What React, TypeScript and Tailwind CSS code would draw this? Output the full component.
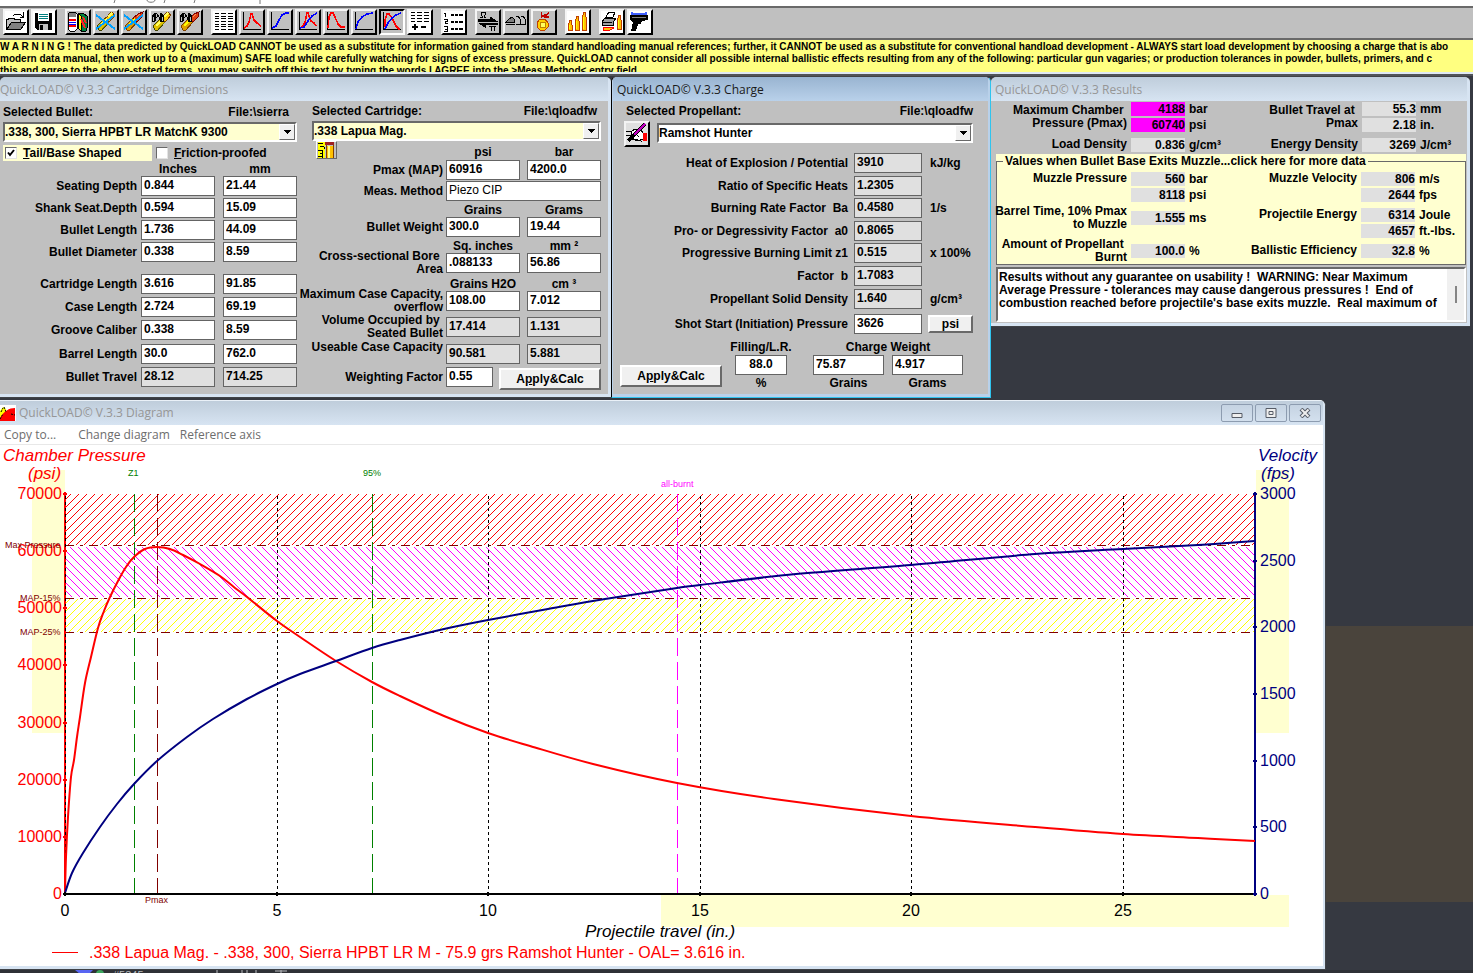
import { clsx } from 'clsx'
import { useId } from 'react'
import type { ReactNode } from 'react'

const inputBase =
  'h-5 w-full min-w-0 border border-[#646464] px-0.5 pb-0.5 leading-4 outline-none'

interface BoxProps {
  id?: string
  value: string
  label?: string
  readOnly?: boolean
  className?: string
}

function Box({ id, value, label, readOnly, className }: BoxProps) {
  return (
    <input
      id={id}
      aria-label={label}
      defaultValue={value}
      readOnly={readOnly}
      className={clsx(
        inputBase,
        readOnly ? 'bg-[#e0e0e0]' : 'bg-white',
        className,
      )}
    />
  )
}

interface PairRowProps {
  label: ReactNode
  name: string
  values: [string, string]
  readOnly?: boolean
}

// label plus the same quantity in two units, fills three grid cells
function PairRow({ label, name, values, readOnly }: PairRowProps) {
  const id = useId()

  return (
    <>
      <label
        htmlFor={id}
        className="-mr-1 flex h-5 items-center justify-end text-right leading-[13px] whitespace-nowrap"
      >
        <span>{label}</span>
      </label>
      <Box id={id} value={values[0]} readOnly={readOnly} />
      <Box label={`${name} (2)`} value={values[1]} readOnly={readOnly} />
    </>
  )
}

function UnitHeads({ first, second }: { first: ReactNode; second: ReactNode }) {
  return (
    <>
      <span />
      <span className="self-end text-center leading-[13px] whitespace-nowrap">
        {first}
      </span>
      <span className="self-end text-center leading-[13px] whitespace-nowrap">
        {second}
      </span>
    </>
  )
}

interface DropDownProps {
  id: string
  value: string
  yellow?: boolean
}

function DropDown({ id, value, yellow }: DropDownProps) {
  return (
    <div className="relative h-5 w-full border-2 border-t-[#696969] border-r-white border-b-white border-l-[#696969]">
      <select
        id={id}
        className={clsx(
          'block h-4 w-full appearance-none font-bold outline-none',
          yellow ? 'bg-[#ffffd0]' : 'bg-white',
        )}
      >
        <option>{value}</option>
      </select>
      <span className="pointer-events-none absolute top-0 right-0 flex h-4 w-4 items-center justify-center border border-t-white border-r-[#696969] border-b-[#696969] border-l-white bg-[#f0f0f0]">
        <svg width="7" height="4" shapeRendering="crispEdges">
          <path d="M0 0h7L3.500 4z" />
        </svg>
      </span>
    </div>
  )
}

function PushButton({
  children,
  className,
}: {
  children: ReactNode
  className?: string
}) {
  return (
    <button
      type="button"
      className={clsx(
        'border-2 border-t-white border-r-[#696969] border-b-[#696969] border-l-white bg-[#f0f0f0] text-center leading-4 font-bold',
        className,
      )}
    >
      {children}
    </button>
  )
}

interface MdiWindowProps {
  title: string
  active?: boolean
  flush?: boolean
  children: ReactNode
}

function MdiWindow({ title, active, flush, children }: MdiWindowProps) {
  return (
    <section
      className={clsx(
        'min-w-0 overflow-hidden rounded-t-md border-t border-b border-t-[#404347] bg-[#c0c0c0]',
        active
          ? 'border-r border-l border-r-[#2fc4ee] border-b-[#2fc4ee] border-l-black'
          : 'border-b-[#404347]',
      )}
    >
      <div
        className={clsx(
          'border-b-[3px]',
          active
            ? 'border-r-2 border-l border-[#b9d1ea]'
            : 'border-r-[3px] border-[#d7e4f2]',
        )}
      >
        <h2
          className={clsx(
            "h-6 bg-linear-to-b font-['Open_Sans',sans-serif] text-[12px] leading-[25px] font-normal",
            active
              ? 'from-[#99b4d1] to-[#b9d1ea] text-[#1a1a1a]'
              : 'from-[#bfcddb] to-[#d7e4f2] text-[#969696]',
            flush ? 'pl-0' : 'pl-1',
          )}
        >
          {title}
        </h2>
        {children}
      </div>
    </section>
  )
}

/* ---------- toolbar ---------- */

function Icon({ children }: { children: ReactNode }) {
  return (
    <svg
      width="22"
      height="22"
      viewBox="0 0 22 22"
      fill="none"
      shapeRendering="crispEdges"
    >
      {children}
    </svg>
  )
}

const axes = <path d="M2.500 1v18M2 18.500h18" stroke="#000" />

const shell = (
  <>
    <path d="M2 15l8-8 4 4-7 8H4z" fill="#e0c000" stroke="#404000" />
    <path d="M10 7l2-1 4-5 4 3-4 5-2 2z" fill="#ffd000" stroke="#804000" />
    <path d="M5 15l7-7M13 6l4-4" stroke="#ffff60" strokeWidth="2" />
    <path d="M7 18l7-7" stroke="#808000" />
  </>
)

const bullet = (
  <>
    <path d="M2 15l8-8 4 4-7 8H4z" fill="#e0a000" stroke="#804000" />
    <path d="M10 7l5-4 5-2-1 5-5 5z" fill="#e04010" stroke="#800000" />
    <path d="M5 15l7-7" stroke="#ffff00" strokeWidth="2" />
    <path d="M14 6l3-3" stroke="#ff9060" />
  </>
)

const crossOut = (
  <path d="M1 4l19 14M1 18L20 4" stroke="#00a0ff" strokeWidth="2" />
)

const binoculars = (
  <>
    <path d="M1 9V5l2-3h2l2 2 2-2h2l2 3v5l-1 1h-3L8 6H6l-2 5H1z" fill="#000" />
    <path d="M2.500 6v4M11.500 6v4M5.500 3v3M8.500 3v3" stroke="#c0c0c0" />
  </>
)

function Cartridge({ x, y, h }: { x: number; y: number; h: number }) {
  return (
    <>
      <path
        d={`M${x} ${y + h}v-${h - 5}l1-2v-3h2v3l1 2v${h - 5}z`}
        fill="#ffc000"
        stroke="#c04000"
      />
      <path d={`M${x + 1.5} ${y + 5}v${h - 6}`} stroke="#ffff00" />
    </>
  )
}

const toolGroups: { name: string; white?: boolean; on?: boolean; icon: ReactNode }[][] = [
  [
    {
      name: 'Open',
      white: true,
      icon: (
        <>
          <path d="M1.500 18V8h2l1-1h4l1 1h6v4" fill="#c0c0c0" stroke="#000" />
          <path d="M1.500 18.500l5-7h14l-5 7z" fill="#808080" stroke="#000" />
          <path d="M8 5l2-2h5l3 3M18.500 1v5h-4" stroke="#000" />
        </>
      ),
    },
    {
      name: 'Save',
      white: true,
      icon: (
        <>
          <path d="M2 2h17v17H4l-2-2z" fill="#000" />
          <path d="M5 2h11v8H5z" fill="#fff" />
          <path d="M6 3.500h9M6 5.500h9M6 7.500h9" stroke="#008080" />
          <path d="M6 13h9v6H6z" fill="#c0c0c0" />
          <path d="M7 14h3v5H7z" fill="#000" />
        </>
      ),
    },
  ],
  [
    {
      name: 'Powder list',
      icon: (
        <>
          <path d="M1 3l2-2h5l2 2v15l-2 2H3l-2-2z" fill="#fff" stroke="#000" />
          <path d="M2 2h7v4H2z" fill="#808080" />
          <path d="M2 8.500h7M2 15h7" stroke="#ff0000" strokeWidth="2" />
          <path d="M2 11.500h7M2 13h7" stroke="#0000ff" />
          <path d="M11 2l3 3v15l-3-3z" fill="#ffff00" stroke="#000" />
          <path d="M11 2h5l4 3v12l-1 3h-5V5z" fill="#008040" stroke="#000" />
          <path d="M14 8l4 9M16 6l3 6" stroke="#ff2020" strokeWidth="2" />
        </>
      ),
    },
    { name: 'Delete cartridge', icon: <>{shell}{crossOut}</> },
    { name: 'Delete bullet', icon: <>{bullet}{crossOut}</> },
    { name: 'Find cartridge', icon: <>{shell}{binoculars}</> },
    { name: 'Find bullet', icon: <>{bullet}{binoculars}</> },
  ],
  [
    {
      name: 'Table',
      white: true,
      icon: (
        <path
          d="M2 2.500h4M8 2.500h5M15 2.500h5M2 5.500h4M8 5.500h5M15 5.500h5M2 7.500h4M8 7.500h5M15 7.500h5M2 10.500h4M8 10.500h5M15 10.500h5M2 13.500h4M8 13.500h5M15 13.500h5M2 15.500h4M8 15.500h5M15 15.500h5M2 18.500h4M8 18.500h5M15 18.500h5"
          stroke="#000"
        />
      ),
    },
    {
      name: 'Pressure over travel',
      icon: (
        <>
          {axes}
          <path d="M3 17l3-2 2-4 2-8h1l2 6 3 3 4 3" stroke="#f00" strokeWidth="1.500" />
        </>
      ),
    },
    {
      name: 'Velocity over travel',
      icon: (
        <>
          {axes}
          <path d="M3 17l4-2 3-6 3-5 4-2h3" stroke="#00f" strokeWidth="1.500" />
        </>
      ),
    },
    {
      name: 'Pressure and velocity over time',
      icon: (
        <>
          {axes}
          <path d="M3 17l3-2 2-4 2-9h1l3 8 3 2 2 3" stroke="#f00" strokeWidth="1.500" />
          <path d="M3 17l4-1 4-6 4-5 5-3" stroke="#00f" strokeWidth="1.500" />
        </>
      ),
    },
    {
      name: 'Pressure curve',
      icon: (
        <>
          {axes}
          <path d="M3 17l1-11 2-4h2l2 4 3 7 3 3h4" stroke="#f00" strokeWidth="1.500" />
        </>
      ),
    },
    {
      name: 'Velocity curve',
      icon: (
        <>
          {axes}
          <path d="M3 18l2-7 4-5 5-3 6-1" stroke="#00f" strokeWidth="1.500" />
        </>
      ),
    },
    {
      name: 'Pressure and velocity',
      on: true,
      icon: (
        <>
          {axes}
          <path d="M4 16V9l2-6h2l3 4 4 8 4 4" stroke="#f00" strokeWidth="1.500" />
          <path d="M4 18l3-6 4-5 4-3 5-2" stroke="#00f" strokeWidth="1.500" />
        </>
      ),
    },
    {
      name: 'Step table',
      white: true,
      icon: (
        <>
          <path
            d="M2 1.500h4M8 1.500h5M15 1.500h5M2 4.500h4M8 4.500h5M15 4.500h5M2 7.500h4M8 7.500h5M15 7.500h5M2 10.500h4M8 10.500h5M15 10.500h5"
            stroke="#000"
          />
          <path d="M3 16h6M6 13v6M12 16h5" stroke="#000" strokeWidth="2" />
        </>
      ),
    },
  ],
  [
    {
      name: 'Numbered list',
      white: true,
      icon: (
        <>
          <path
            d="M1 2.500h2M2.500 2v4M1 8.500h3v2h-2v2h3M1 15.500h3v5h-3M2 18.500h2"
            stroke="#000"
          />
          <path
            d="M8 4h3M12 4h3M16 4h4M8 11h3M12 11h3M16 11h4M8 18h3M12 18h3M16 18h4"
            stroke="#000"
            strokeWidth="2"
          />
        </>
      ),
    },
  ],
  [
    {
      name: 'Unit conversion',
      icon: (
        <>
          <path d="M3 6.500h2V5l-1-1V1.500h4V4L7 5v1.500h2" stroke="#000" />
          <path d="M1 8.500h12V6l6 4H1z" fill="#000" stroke="#000" />
          <path d="M20 13.500H8V16l-6-4h18z" fill="#000" stroke="#000" />
          <path d="M12 15.500h7M14.500 15v5M17.500 15v5" stroke="#000" />
        </>
      ),
    },
    {
      name: 'Bullet step',
      icon: (
        <>
          <path d="M1 11l3-3 3-2 2 2v3z" fill="#808080" stroke="#000" />
          <path d="M1 13.500h9" stroke="#000" />
          <path d="M11 5h2l2 3v5.500h-4M16 5h2l2 3v5.500h-4" stroke="#000" />
        </>
      ),
    },
    {
      name: 'Powder charge',
      icon: (
        <>
          <path d="M8.500 1v6M9 5h3l4-3M12 3v3h4" stroke="#c00000" strokeWidth="1.500" />
          <path d="M7 8h5l3 4v4l-3 3H7l-3-3v-4z" fill="#ffd000" stroke="#c04000" />
          <path d="M7 11h5v5H7z" fill="#ffff60" stroke="#c08000" />
        </>
      ),
    },
  ],
  [
    {
      name: 'Compare cartridges',
      white: true,
      icon: (
        <>
          <Cartridge x={1} y={9} h={10} />
          <Cartridge x={8} y={5} h={14} />
          <Cartridge x={15} y={1} h={18} />
        </>
      ),
    },
  ],
  [
    {
      name: 'Print load',
      white: true,
      icon: (
        <>
          <path d="M1 11l3-4h11l-3 5v2H1z" fill="#a0a0a0" stroke="#000" />
          <path d="M5 6l3-5h6l-2 5z" fill="#fff" stroke="#000" />
          <path d="M2 11.500h9" stroke="#000" />
          <Cartridge x={16} y={4} h={14} />
          <path d="M2 16h7l4 1-4 2H2z" fill="#ffc000" stroke="#ff0000" />
        </>
      ),
    },
    {
      name: 'Gun',
      white: true,
      icon: (
        <>
          <path d="M2 1h2v1h12V1h2v3H2z" fill="#4060ff" />
          <path d="M1 4h18v5l-6 1-1 3H9l-2 7H2l2-9-3-2z" fill="#000" />
          <path d="M3 6.500h14" stroke="#808080" />
        </>
      ),
    },
  ],
]

function Toolbar() {
  return (
    <header>
      <div className="h-1.5 bg-white">
        <svg width="300" height="4" className="block" stroke="#777">
          <path d="M115 0l-1 3M147 0c0 3 8 3 8 0M165 0l-1 3M195 0l-1 3M260 0v4" fill="none" />
        </svg>
      </div>
      <div className="flex h-[34px] gap-2 border-y-2 border-[#696969] bg-[#c0c0c0] pt-px pl-[3px]">
        {toolGroups.map((group, i) => (
          <div key={i} className="flex gap-0.5">
            {group.map((tool) => (
              <button
                key={tool.name}
                type="button"
                aria-label={tool.name}
                className={clsx(
                  'size-[26px] border-2',
                  tool.on
                    ? 'border-t-black border-r-white border-b-white border-l-black'
                    : 'border-t-[#f4f4f4] border-r-black border-b-black border-l-[#f4f4f4]',
                  tool.white ? 'bg-white' : 'bg-[#c0c0c0]',
                )}
              >
                <Icon>{tool.icon}</Icon>
              </button>
            ))}
          </div>
        ))}
      </div>
      <p className="h-8 overflow-hidden bg-[#ffff80] pt-px text-[10px] leading-3 font-bold whitespace-pre">
        {`W A R N I N G ! The data predicted by QuickLOAD CANNOT be used as a substitute for information gained from standard handloading manual references; further, it CANNOT be used as a substitute for conventional handload development - ALWAYS start load development by choosing a charge that is abo
modern data manual, then work up to a (maximum) SAFE load while carefully watching for signs of excess pressure. QuickLOAD cannot consider all possible internal ballistic effects resulting from any of the following: particular gun vagaries; or production tolerances in powder, bullets, primers, and c
this and agree to the above-stated terms, you may switch off this text by typing the words I AGREE into the >Meas.Method< entry field.`}
      </p>
      <div className="h-1 border-t-2 border-t-[#dfe9f3] bg-[#505358]" />
    </header>
  )
}

/* ---------- windows ---------- */

function CartridgeWindow() {
  return (
    <MdiWindow title="QuickLOAD© V.3.3 Cartridge Dimensions" flush>
      <div className="grid h-[293px] grid-cols-2">
        <div className="pr-[7px] pl-[3px]">
          <div className="flex h-[21px] items-center justify-between pr-2">
            <label htmlFor="bullet">Selected Bullet:</label>
            <span>File:\sierra</span>
          </div>
          <DropDown id="bullet" value=".338, 300, Sierra HPBT LR MatchK 9300" yellow />
          <div className="mt-[3px] flex h-4 items-center gap-1">
            <label className="flex h-4 w-[149px] items-center gap-1.5 bg-[#ffffd0] pl-0.5">
              <CheckBox checked />
              <span>
                <u>T</u>ail/Base Shaped
              </span>
            </label>
            <label className="flex items-center gap-1.5">
              <CheckBox />
              <span>
                <u>F</u>riction-proofed
              </span>
            </label>
          </div>
          <div className="grid grid-cols-[minmax(0,1fr)_74px_74px] grid-rows-[15px_22px_22px_22px_32px_23px_23px_24px_23px_20px] gap-x-2">
            <UnitHeads first="Inches" second="mm" />
            <PairRow label="Seating Depth" name="Seating Depth" values={['0.844', '21.44']} />
            <PairRow label="Shank Seat.Depth" name="Shank Seat.Depth" values={['0.594', '15.09']} />
            <PairRow label="Bullet Length" name="Bullet Length" values={['1.736', '44.09']} />
            <PairRow label="Bullet Diameter" name="Bullet Diameter" values={['0.338', '8.59']} />
            <PairRow label="Cartridge Length" name="Cartridge Length" values={['3.616', '91.85']} />
            <PairRow label="Case Length" name="Case Length" values={['2.724', '69.19']} />
            <PairRow label="Groove Caliber" name="Groove Caliber" values={['0.338', '8.59']} />
            <PairRow label="Barrel Length" name="Barrel Length" values={['30.0', '762.0']} />
            <PairRow
              label="Bullet Travel"
              name="Bullet Travel"
              values={['28.12', '714.25']}
              readOnly
            />
          </div>
        </div>

        <div className="pr-[7px] pl-2">
          <div className="flex h-5 items-center justify-between pr-1">
            <label htmlFor="cartridge">Selected Cartridge:</label>
            <span>File:\qloadfw</span>
          </div>
          <DropDown id="cartridge" value=".338 Lapua Mag." yellow />
          <div className="grid grid-cols-[minmax(0,1fr)_74px_74px] grid-rows-[19px_21px_22px_14px_22px_14px_24px_14px_26px_27px_23px_24px] gap-x-[7px]">
            <button
              type="button"
              aria-label="Cartridge drawing"
              className="ml-1 h-[18px] w-[21px] border border-t-white border-r-[#696969] border-b-[#696969] border-l-white"
            >
              <svg width="19" height="16" viewBox="0 0 19 16" shapeRendering="crispEdges">
                <path d="M0 0h19v16H0z" fill="#c0c0c0" />
                <path d="M1 0h7v16H1z" fill="#ff0" />
                <path d="M1 1.500h5M3 4.500h4M1 8.500h4M3 11.500h3M1 14.500h4M7.500 5v2M5.500 8v8" stroke="#000" />
                <path d="M8 0h9v3H8z" fill="#a02020" />
                <path d="M10 4h6v12h-6z" fill="#ffc000" />
                <path d="M11 4h2v12h-2z" fill="#ff8" />
                <path d="M9.500 3v13M16.500 3v13" stroke="#804000" />
              </svg>
            </button>
            <span className="self-end text-center leading-4">psi</span>
            <span className="self-end text-center leading-4">bar</span>
            <PairRow label="Pmax (MAP)" name="Pmax" values={['60916', '4200.0']} />
            <label
              htmlFor="method"
              className="-mr-1 flex h-5 items-center justify-end whitespace-nowrap"
            >
              Meas. Method
            </label>
            <div className="col-span-2">
              <Box id="method" value="Piezo CIP" className="font-normal" />
            </div>
            <UnitHeads first="Grains" second="Grams" />
            <PairRow label="Bullet Weight" name="Bullet Weight" values={['300.0', '19.44']} />
            <UnitHeads first="Sq. inches" second="mm ²" />
            <PairRow
              label={
                <>
                  Cross-sectional Bore&nbsp;
                  <br />
                  Area
                </>
              }
              name="Bore Area"
              values={['.088133', '56.86']}
            />
            <UnitHeads first="Grains H2O" second="cm ³" />
            <PairRow
              label={
                <>
                  Maximum Case Capacity,
                  <br />
                  overflow
                </>
              }
              name="Case Capacity"
              values={['108.00', '7.012']}
            />
            <PairRow
              label={
                <>
                  Volume Occupied by&nbsp;
                  <br />
                  Seated Bullet
                </>
              }
              name="Seated Volume"
              values={['17.414', '1.131']}
              readOnly
            />
            <PairRow
              label={
                <>
                  Useable Case Capacity
                  <br />
                  &nbsp;
                </>
              }
              name="Useable Capacity"
              values={['90.581', '5.881']}
              readOnly
            />
            <label
              htmlFor="weighting"
              className="-mr-1 flex h-5 items-center justify-end whitespace-nowrap"
            >
              Weighting Factor
            </label>
            <div className="col-span-2 flex items-start justify-between">
              <div className="w-[47px]">
                <Box id="weighting" value="0.55" />
              </div>
              <PushButton className="mt-px h-[22px] w-[102px]">
                A<u>p</u>ply&amp;Calc
              </PushButton>
            </div>
          </div>
        </div>
      </div>
    </MdiWindow>
  )
}

function CheckBox({ checked }: { checked?: boolean }) {
  return (
    <span className="relative size-3">
      <input
        type="checkbox"
        defaultChecked={checked}
        className="peer block size-3 appearance-none border border-t-[#696969] border-r-[#e3e3e3] border-b-[#e3e3e3] border-l-[#696969] bg-white"
      />
      <svg
        viewBox="0 0 12 12"
        className="pointer-events-none absolute inset-0 hidden size-3 peer-checked:block"
        fill="none"
      >
        <path d="M3 5.500l2 2.500 4-5" stroke="#000" strokeWidth="2" />
      </svg>
    </span>
  )
}

const propellantRows: { label: string; value: string; unit: string }[] = [
  { label: 'Heat of Explosion / Potential', value: '3910', unit: 'kJ/kg' },
  { label: 'Ratio of Specific Heats', value: '1.2305', unit: '' },
  { label: 'Burning Rate Factor\u00a0 Ba', value: '0.4580', unit: '1/s' },
  { label: 'Pro- or Degressivity Factor\u00a0 a0', value: '0.8065', unit: '' },
  { label: 'Progressive Burning Limit z1', value: '0.515', unit: 'x 100%' },
  { label: 'Factor\u00a0 b', value: '1.7083', unit: '' },
  { label: 'Propellant Solid Density', value: '1.640', unit: 'g/cm³' },
  { label: 'Shot Start (Initiation) Pressure', value: '3626', unit: 'psi' },
]

function ChargeWindow() {
  return (
    <MdiWindow title="QuickLOAD© V.3.3 Charge" active>
      <div className="h-[293px] pr-[15px] pl-[11px]">
        <div className="flex h-5 items-center justify-between pl-0.5">
          <label htmlFor="propellant">Selected Propellant:</label>
          <span>File:\qloadfw</span>
        </div>
        <div className="flex h-8 items-start gap-[7px]">
          <button
            type="button"
            aria-label="Edit propellant"
            className="size-[26px] shrink-0 border-2 border-t-[#f4f4f4] border-r-black border-b-black border-l-[#f4f4f4] bg-[#e0e0e0]"
          >
            <Icon>
              <path d="M5 9l4-3h5l3 4v6l-3 1H9l-4-3z" fill="#fff" stroke="#000" />
              <path d="M0 8.500h6M0 12.500h5M3 16.500h8l5 2M9 10l4 4" stroke="#000" />
              <path d="M17 10h4v8h-4z" fill="#f00" />
              <path d="M2 18L19 1" stroke="#000" strokeWidth="3" />
              <path d="M8 12L19 1" stroke="#c000c0" strokeWidth="1.500" />
            </Icon>
          </button>
          <div className="min-w-0 grow pt-0.5">
            <DropDown id="propellant" value="Ramshot Hunter" />
          </div>
        </div>
        <div className="grid grid-cols-[minmax(0,1fr)_68px_45px] grid-rows-[23px_22px_23px_22px_23px_23px_25px_20px] gap-x-1.5">
          {propellantRows.map((row, i) => (
            <PropellantRow
              key={row.label}
              {...row}
              editable={i === propellantRows.length - 1}
            />
          ))}
        </div>
        <div className="flex items-end pr-2.5">
          <PushButton className="-ml-1 mb-1 h-[22px] w-[102px]">
            A<u>p</u>ply&amp;Calc
          </PushButton>
          <div className="ml-auto flex w-[68px] flex-col items-center">
            <label htmlFor="filling" className="pt-1.5 leading-[15px]">
              Filling/L.R.
            </label>
            <Box id="filling" value="88.0" className="max-w-[52px] text-center" />
            <span className="leading-4">%</span>
          </div>
          <fieldset className="ml-[18px] grid w-[150px] grid-cols-2 gap-x-2 text-center">
            <legend className="w-full pt-1.5 leading-[15px]">Charge Weight</legend>
            <Box label="Charge in grains" value="75.87" />
            <Box label="Charge in grams" value="4.917" />
            <span className="leading-4">Grains</span>
            <span className="leading-4">Grams</span>
          </fieldset>
        </div>
      </div>
    </MdiWindow>
  )
}

interface PropellantRowProps {
  label: string
  value: string
  unit: string
  editable: boolean
}

function PropellantRow({ label, value, unit, editable }: PropellantRowProps) {
  const id = useId()

  return (
    <>
      <label
        htmlFor={id}
        className="flex h-5 items-center justify-end whitespace-nowrap"
      >
        {label}
      </label>
      <Box id={id} value={value} readOnly={!editable} />
      {editable ? (
        <PushButton className="mt-px h-[18px] leading-[14px]">{unit}</PushButton>
      ) : (
        <span className="pl-0.5 leading-5 whitespace-nowrap">{unit}</span>
      )}
    </>
  )
}

interface ResultProps {
  label: ReactNode
  values: [string, string][]
  center?: boolean
  alert?: boolean
  className?: string
}

function Result({ label, values, center, alert, className }: ResultProps) {
  return (
    <div className={clsx('flex gap-1', center ? 'items-center' : 'items-start', className)}>
      <div className="flex min-w-0 flex-1 justify-end text-right leading-[13px] whitespace-nowrap">
        <span>{label}</span>
      </div>
      <div className="flex flex-col gap-0.5">
        {values.map(([value, unit]) => (
          <div key={unit} className="flex gap-1 leading-[14px]">
            <output
              className={clsx(
                'h-3.5 w-[54px] text-right',
                alert ? 'bg-[#ff00ff]' : 'bg-[#e0e0e0]',
              )}
            >
              {value}
            </output>
            <span className="w-[42px] whitespace-nowrap">{unit}</span>
          </div>
        ))}
      </div>
    </div>
  )
}

function ResultsWindow() {
  return (
    <MdiWindow title="QuickLOAD© V.3.3 Results">
      <div className="pr-px pl-[5px]">
        <div className="grid h-[53px] grid-cols-2 pt-px">
          <div>
            <Result
              label={
                <>
                  Maximum Chamber&nbsp;
                  <br />
                  Pressure (Pmax)
                </>
              }
              values={[
                ['4188', 'bar'],
                ['60740', 'psi'],
              ]}
              center
              alert
            />
            <Result label="Load Density" values={[['0.836', 'g/cm³']]} className="mt-1.5" />
          </div>
          <div className="pr-1">
            <Result
              label={
                <>
                  Bullet Travel at&nbsp;
                  <br />
                  Pmax
                </>
              }
              values={[
                ['55.3', 'mm'],
                ['2.18', 'in.'],
              ]}
              center
            />
            <Result label="Energy Density" values={[['3269', 'J/cm³']]} className="mt-1.5" />
          </div>
        </div>

        <div className="bg-[#ffffd0]">
          <fieldset className="border border-[#696969]">
            <legend className="ml-1.5 px-0.5 leading-[14px]">
              Values when Bullet Base Exits Muzzle...click here for more data
            </legend>
            <div className="grid grid-cols-2 pt-1">
              <div>
                <Result
                  label="Muzzle Pressure"
                  values={[
                    ['560', 'bar'],
                    ['8118', 'psi'],
                  ]}
                />
                <Result
                  label={
                    <>
                      Barrel Time, 10% Pmax
                      <br />
                      to Muzzle
                    </>
                  }
                  values={[['1.555', 'ms']]}
                  center
                  className="mt-[3px]"
                />
                <Result
                  label={
                    <>
                      Amount of Propellant&nbsp;
                      <br />
                      Burnt
                    </>
                  }
                  values={[['100.0', '%']]}
                  center
                  className="mt-[7px]"
                />
              </div>
              <div className="pr-1">
                <Result
                  label="Muzzle Velocity"
                  values={[
                    ['806', 'm/s'],
                    ['2644', 'fps'],
                  ]}
                />
                <Result
                  label="Projectile Energy"
                  values={[
                    ['6314', 'Joule'],
                    ['4657', 'ft.-lbs.'],
                  ]}
                  className="mt-1.5"
                />
                <Result
                  label="Ballistic Efficiency"
                  values={[['32.8', '%']]}
                  className="mt-1.5"
                />
              </div>
            </div>
          </fieldset>
        </div>

        <div className="mt-0.5 mb-px flex h-[55px] border-2 border-t-[#696969] border-r-white border-b-white border-l-[#696969] bg-white">
          <textarea
            aria-label="Remarks"
            readOnly
            className="min-w-0 grow resize-none overflow-hidden pt-0.5 pl-px leading-[13px] whitespace-pre outline-none"
            defaultValue={
              'Results without any guarantee on usability !  WARNING: Near Maximum\nAverage Pressure - tolerances may cause dangerous pressures !  End of\ncombustion reached before projectile\'s base exits muzzle.  Real maximum of'
            }
          />
          <div className="flex w-[17px] items-center justify-center bg-[#f0f0f0]">
            <div className="h-[17px] w-0.5 bg-[#858585]" />
          </div>
        </div>
      </div>
    </MdiWindow>
  )
}

/* ---------- diagram ---------- */

const LEFT = 65
const RIGHT = 1255
const TOP = 49
const BOTTOM = 449

const travelX = (inches: number) => Math.round(LEFT + inches * 42.32)
const pressureY = (psi: number) => Math.round(BOTTOM - (psi * 400) / 70000)
const velocityY = (fps: number) => Math.round(BOTTOM - (fps * 400) / 3000)

const pressurePoints: [number, number][] = [
  [65, 448], [66, 412], [68, 372], [71, 332], [74, 315], [77, 292], [80, 272],
  [85, 238], [91, 212], [98, 183], [104, 166], [110, 152], [118, 136],
  [126, 122], [134, 112], [145, 104], [157, 102], [170, 104], [183, 110],
  [200, 119], [220, 131], [235, 143], [247, 152], [277, 176], [300, 192],
  [336, 216], [372, 237], [400, 251], [444, 271], [488, 288], [530, 301],
  [593, 319], [677, 338], [774, 354], [911, 371], [1035, 382], [1123, 389],
  [1198, 393], [1255, 396],
]
const velocityPoints: [number, number][] = [
  [65, 448], [72, 428], [83, 408], [100, 382], [117, 359], [134, 339],
  [157, 316], [187, 292], [213, 274], [247, 254], [277, 239], [300, 229],
  [336, 216], [372, 203], [400, 195], [444, 184], [488, 175], [548, 164],
  [605, 154], [677, 143], [700, 140], [796, 129], [911, 120], [1035, 109],
  [1123, 104], [1198, 100], [1255, 96],
]

// Catmull-Rom spline through the samples
function smooth(points: [number, number][]) {
  return points.reduce((d, [x, y], i) => {
    if (i === 0) return `M${x} ${y}`

    const [ax, ay] = points[Math.max(i - 2, 0)]
    const [bx, by] = points[i - 1]
    const [nx, ny] = points[Math.min(i + 1, points.length - 1)]

    return `${d}C${bx + (x - ax) / 6} ${by + (y - ay) / 6} ${x - (nx - bx) / 6} ${y - (ny - by) / 6} ${x} ${y}`
  }, '')
}

function Tick({ x, y, color }: { x: number; y: number; color: string }) {
  return <path d={`M${x - 2} ${y}l2-2 2 2-2 2z`} fill={color} stroke={color} />
}

function Chart() {
  return (
    <svg
      viewBox="0 0 1300 521"
      preserveAspectRatio="xMinYMin meet"
      className="block h-[521px] w-full overflow-visible font-['Liberation_Sans',Arial,sans-serif] font-normal"
      role="img"
      aria-label="Chamber pressure and velocity over projectile travel"
    >
      <defs>
        <pattern id="over" width="8" height="8" patternUnits="userSpaceOnUse">
          <path d="M-1 9L9-1" stroke="#f00" shapeRendering="crispEdges" />
        </pattern>
        <pattern id="near" width="8" height="8" patternUnits="userSpaceOnUse">
          <path d="M-1-1L9 9" stroke="#f0f" shapeRendering="crispEdges" />
        </pattern>
        <pattern id="watch" width="8" height="8" patternUnits="userSpaceOnUse">
          <path d="M-1 9L9-1" stroke="#ff0" shapeRendering="crispEdges" />
        </pattern>
      </defs>

      <g fill="#ffffd0">
        <rect x="32" y="25" width="33" height="263" />
        <rect x="1256" y="25" width="33" height="263" />
        <rect x="661" y="450" width="628" height="32" />
      </g>

      <rect x={LEFT} y={TOP} width={RIGHT - LEFT} height="51" fill="url(#over)" />
      <rect x={LEFT} y="102" width={RIGHT - LEFT} height="50" fill="url(#near)" />
      <rect x={LEFT} y="154" width={RIGHT - LEFT} height="33" fill="url(#watch)" />

      <g shapeRendering="crispEdges">
        <path
          d="M65 100.500h1190M65 153.500h1190M65 187.500h1190"
          stroke="#800000"
          strokeDasharray="9 6 3 6"
        />
        <g strokeDasharray="18 6">
          <path d="M134.500 49v400M372.500 49v400" stroke="#008000" />
          <path d="M157.500 49v400" stroke="#800000" />
          <path d="M677.500 49v400" stroke="#f0f" />
        </g>
        <path d="M65 49v400" stroke="#f00" strokeWidth="2" />
        {[0, 5, 10, 15, 20, 25].map((n) => (
          <path
            key={n}
            d={`M${travelX(n) + 0.5} 51v398`}
            stroke="#000"
            strokeDasharray="3 3"
          />
        ))}
        <path d="M64 449h1191" stroke="#000" strokeWidth="2" />
        <path d="M1255 49v401" stroke="#000080" strokeWidth="2" />
      </g>

      <g fill="none" strokeWidth="2" strokeLinejoin="round">
        <path d={smooth(pressurePoints)} stroke="#f00" />
        <path d={smooth(velocityPoints)} stroke="#000080" />
      </g>

      <g fontSize="16">
        {[0, 1, 2, 3, 4, 5, 6, 7].map((n) => (
          <g key={n}>
            <Tick x={65} y={pressureY(n * 10000)} color={n ? '#f00' : '#000'} />
            <text x="62" y={pressureY(n * 10000) + 5} textAnchor="end" fill="#f00">
              {n * 10000}
            </text>
          </g>
        ))}
        {[0, 500, 1000, 1500, 2000, 2500, 3000].map((n) => (
          <g key={n}>
            <Tick x={1255} y={velocityY(n)} color="#000080" />
            <text x="1260" y={velocityY(n) + 5} fill="#000080">
              {n}
            </text>
          </g>
        ))}
        {[0, 5, 10, 15, 20, 25].map((n) => (
          <g key={n}>
            <Tick x={travelX(n)} y={449} color="#000" />
            <text x={travelX(n)} y="471" textAnchor="middle">
              {n}
            </text>
          </g>
        ))}
        <text x="89" y="513" fill="#f00">
          .338 Lapua Mag. - .338, 300, Sierra HPBT LR M - 75.9 grs Ramshot Hunter - OAL= 3.616 in.
        </text>
      </g>
      <path d="M52 507.500h26" stroke="#f00" />

      <g fontSize="17" fontStyle="italic">
        <text x="3" y="16" fill="#f00">
          Chamber Pressure
        </text>
        <text x="28" y="34" fill="#f00">
          (psi)
        </text>
        <text x="1258" y="16" fill="#000080">
          Velocity
        </text>
        <text x="1261" y="34" fill="#000080">
          (fps)
        </text>
        <text x="585" y="492">Projectile travel (in.)</text>
      </g>

      <g fontSize="9" fill="#800000">
        <text x="5" y="103">
          Max Pressure
        </text>
        <text x="20" y="156">
          MAP-15%
        </text>
        <text x="20" y="190">
          MAP-25%
        </text>
        <text x="145" y="458">
          Pmax
        </text>
        <text x="128" y="31" fill="#008000">
          Z1
        </text>
        <text x="363" y="31" fill="#008000">
          95%
        </text>
        <text x="661" y="42" fill="#f0f">
          all-burnt
        </text>
      </g>
    </svg>
  )
}

const captionButton =
  'flex h-[18px] w-8 items-center justify-center rounded-xs border border-[#8d9cb0] bg-linear-to-b from-[#c5d3e2] to-[#d3e0ee]'

function DiagramWindow() {
  return (
    <section className="mt-0.5 w-[90%] shrink-0 overflow-hidden rounded-tr-md border-r border-b border-[#404347] bg-white">
      <div className="border-t border-r-2 border-b-[3px] border-t-[#eaf1f8] border-r-[#d7e4f2] border-b-[#d7e4f2]">
        <div className="flex h-6 items-center bg-linear-to-b from-[#bfcddb] to-[#d7e4f2] pr-0.5">
          <svg width="16" height="16" viewBox="0 0 16 16">
            <path d="M0 0h16v16H0z" fill="#fff" />
            <path d="M0 6l3-4 3 2 1 5-7 4z" fill="#ff0" />
            <path d="M0 16v-3C4 6 9 3 15 3v13z" fill="#f00" />
            <path d="M1 7l2-4M4 2l2 5M0 14l3-5M11 9l4 1" stroke="#000" strokeDasharray="2 1" />
          </svg>
          <h2 className="pl-[3px] font-['Open_Sans',sans-serif] text-[12px] font-normal text-[#969696]">
            QuickLOAD© V.3.3 Diagram
          </h2>
          <div className="ml-auto flex gap-0.5">
            <button type="button" aria-label="Minimize" className={captionButton}>
              <svg width="12" height="10">
                <path d="M1 5.500h10v4H1z" fill="#eee" stroke="#555b66" />
              </svg>
            </button>
            <button type="button" aria-label="Restore" className={captionButton}>
              <svg width="12" height="10">
                <path d="M1 .500h10v9H1z" fill="#eee" stroke="#555b66" />
                <path d="M4 3.500h4v3H4z" fill="none" stroke="#555b66" />
              </svg>
            </button>
            <button type="button" aria-label="Close" className={captionButton}>
              <svg width="12" height="10" fill="none">
                <path d="M2 1l8 8M10 1L2 9" stroke="#555b66" strokeWidth="4" />
                <path d="M2.500 1.500l7 7M9.500 1.500l-7 7" stroke="#eee" strokeWidth="2" />
              </svg>
            </button>
          </div>
        </div>
        <nav className="flex h-5 items-center border-b border-[#e8e8e8] pl-1 font-['Open_Sans',sans-serif] text-[12px] font-normal text-[#6d6d6d]">
          <button type="button" className="mr-[22px]">
            Copy to...
          </button>
          <button type="button" className="mr-2.5">
            Change diagram
          </button>
          <button type="button">Reference axis</button>
        </nav>
        <Chart />
      </div>
    </section>
  )
}

export default function App() {
  return (
    <main className="flex h-screen flex-col overflow-hidden bg-[#363941] font-['Liberation_Sans',Arial,sans-serif] text-[12px] leading-4 font-bold text-black">
      <Toolbar />
      <div className="grid shrink-0 grid-cols-[minmax(0,611fr)_minmax(0,380fr)_minmax(0,479fr)] items-start pr-[3px]">
        <CartridgeWindow />
        <ChargeWindow />
        <ResultsWindow />
      </div>
      <div className="flex shrink-0">
        <DiagramWindow />
        <div className="mt-[228px] h-[276px] grow bg-[#4a443c]" />
      </div>
      <footer className="h-1 shrink-0 overflow-hidden bg-[#2f3136]">
        <svg width="300" height="4" className="block">
          <path d="M75 0h18l-4 4H80z" fill="#5865f2" />
          <circle cx="100" cy="4" r="4" fill="#3ba55d" />
          <path d="M217 0v4M242 0v4M247 0v4M256 0v4M275 1h12M281 0v4" stroke="#b9bbbe" />
          <text x="113" y="9" fontSize="11" fontWeight="400" fill="#b9bbbe">
            #5345
          </text>
        </svg>
      </footer>
    </main>
  )
}
